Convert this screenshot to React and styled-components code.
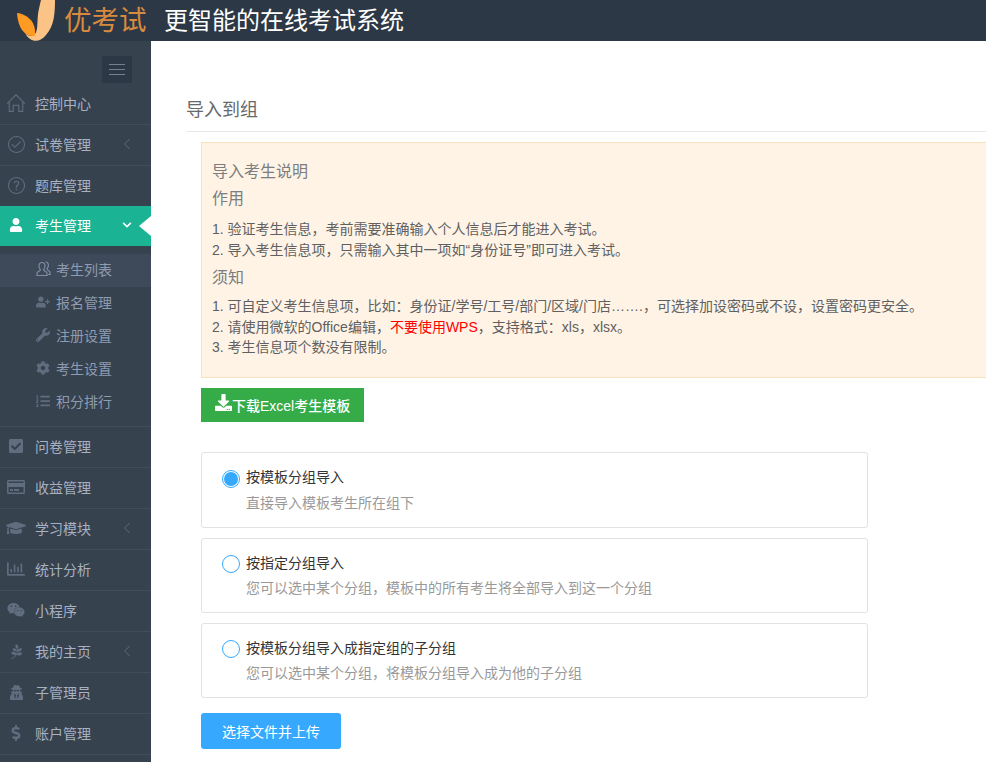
import React from "react";
import styled, { createGlobalStyle } from "styled-components";
import { SlHome, SlCheck, SlQuestion, SlArrowLeft } from "react-icons/sl";
import { FaUser, FaUserPlus, FaWrench, FaCog, FaListOl, FaCheckSquare, FaRegCreditCard, FaGraduationCap, FaRegChartBar, FaWeixin, FaPagelines, FaUserSecret, FaDollarSign, FaDownload, FaChevronDown } from "react-icons/fa";

const Global = createGlobalStyle`
  html, body { margin: 0; padding: 0; height: 100%; overflow: hidden; background: #fff; }
  body { font-family: "Liberation Sans", "Noto Sans CJK SC", sans-serif; font-size: 14px; color: #676a6c; }
  * { box-sizing: border-box; }
`;
const Page = styled.div`display: flex; flex-direction: column; width: 986px; height: 762px; overflow: hidden;`;
const Header = styled.header`height: 41px; flex: none; background: #2c3845; display: flex; align-items: center; padding-left: 17px; overflow: hidden;`;
const LogoMark = styled.svg`width: 38px; height: 41px; flex: none;`;
const Brand = styled.span`font-size: 27.5px; line-height: 41px; color: #d98a3e; margin-left: 9px; width: 100px; white-space: nowrap;`;
const Slogan = styled.span`font-size: 24px; line-height: 41px; color: #fff; white-space: nowrap;`;
const Body = styled.div`display: flex; flex: 1; min-height: 0;`;
const Side = styled.aside`width: 151px; flex: none; background: #37424f; padding-top: 15px; overflow: hidden;`;
const Toggle = styled.div`width: 30px; height: 27px; margin: 0 0 1px 102px; background: #2c3845; display: flex; flex-direction: column; justify-content: center; align-items: center; gap: 4px;
  i { display: block; width: 16px; height: 1px; background: #77818d; }`;
const Item = styled.div`display: flex; align-items: center; position: relative; padding-bottom: 2px; font-size: 14px;
  color: ${p => p.$active ? "#fff" : "#a7b1c2"};
  background: ${p => p.$active ? "#1ab394" : "transparent"};
  border-bottom: ${p => p.$flat ? "none" : "1px solid #424d5b"};
  height: ${p => p.$flat ? "40px" : "41px"};`;
const IconBox = styled.span`width: 35px; flex: none; display: flex; justify-content: center; padding-right: 3px; color: ${p => p.$active ? "#fff" : "#5f6d7e"}; font-size: ${p => p.$size || 16}px;`;
const Arrow = styled.span`position: absolute; left: 122px; font-size: 10px; display: flex; color: ${p => p.$active ? "#fff" : "#5f6d7e"};`;
const Notch = styled.span`position: absolute; right: 0; top: 10px; border: 10px solid transparent; border-right-color: #fff; border-left: 0; border-right-width: 12px;`;
const SubList = styled.div`padding: 8px 0; border-bottom: 1px solid #424d5b; height: 181px;`;
const SubItem = styled.div`height: 33px; display: flex; align-items: center; padding-bottom: 3px; font-size: 14px; color: #8f9bb0; background: ${p => p.$active ? "#3e4a5a" : "transparent"};`;
const SubIcon = styled.span`width: 56px; flex: none; display: flex; justify-content: center; padding-left: 35px; padding-right: 5px; color: #5f6d7e; font-size: 14px;
  svg { flex: none; }`;
const FriendsIcon = styled.svg`width: 15px; height: 16px; fill: none; stroke: #7f8ea6; stroke-width: 1.1;`;
const Main = styled.main`flex: 1; min-width: 0; padding: 56px 0 0 35px; overflow: hidden;`;
const Title = styled.h2`margin: 0; height: 35px; font-size: 18px; font-weight: 400; line-height: 26px; color: #676a6c; border-bottom: 1px solid #e7eaec;`;
const Content = styled.div`padding: 10px 0 0 15px;`;
const Notice = styled.div`width: 820px; height: 236px; background: #fff3e6; border: 1px solid #fbdfc0; padding: 16px 10px;`;
const NoticeTitle = styled.h4`margin: 0; font-size: 16px; font-weight: 400; line-height: 26px; height: ${p => p.$h || 27}px; color: #7b7d7e;`;
const NoticeText = styled.ol`margin: 0 0 ${p => p.$gap}px; padding: 0; list-style: none; font-size: 14px; line-height: 20.5px; color: #606060;
  li { white-space: nowrap; }
  b { font-weight: 400; color: #f00; }`;
const Download = styled.button`display: flex; align-items: center; width: 163px; height: 34px; margin-top: 10px; padding: 0 0 0 14px; border: 0; background: #35ac48; color: #fff; font: inherit; font-size: 14px; font-weight: 500; white-space: nowrap;
  svg { font-size: 17px; margin-top: -5px; flex: none; }`;
const Options = styled.div`display: flex; flex-direction: column; gap: 10px; margin-top: 30px; width: 667px;`;
const Option = styled.div`height: ${p => p.$h}px; border: 1px solid #e2e2e2; border-radius: 3px; padding: ${p => p.$top}px 20px 0; display: grid; grid-template-columns: 24px 1fr; grid-template-rows: 17px auto; row-gap: 7px;`;
const Radio = styled.span`width: 18px; height: 18px; border-radius: 50%; border: 1px solid #36a9ff; display: flex; align-items: center; justify-content: center;
  &::after { content: ""; width: 14px; height: 14px; border-radius: 50%; background: ${p => p.$on ? "#36a9ff" : "transparent"}; }`;
const OptLabel = styled.span`font-size: 14px; line-height: ${p => p.$lh}px; color: #333;`;
const OptDesc = styled.span`grid-column: 2; font-size: 14px; line-height: 18px; color: #999;`;
const Upload = styled.button`display: block; width: 140px; height: 36px; margin-top: 15px; border: 0; border-radius: 3px; background: #36a9ff; color: #fff; font: inherit; font-size: 14px;`;

const Logo = () => (
  <LogoMark viewBox="0 0 38 41">
    <path d="M24 0 H38 C38 14 37 26 29 35 C23 43 13 43 8 33 C12 37 16 36 18 34 C21 30 20 24 21 14 C22 8 23 4 24 0Z" fill="#fcc386" />
    <path d="M0 13 C9 14 17 20 18 30 L18 36 C9 37 1 30 0 13Z" fill="#ff9a22" />
  </LogoMark>
);
const Friends = () => (
  <FriendsIcon viewBox="0 0 15 16">
    <path d="M6 1.5 C8.2 1.5 9.2 3.2 9 5.2 C8.9 6.8 8 8 7.6 8.8 C7.5 9.8 10.6 10.6 11 12 L11.2 14.5 H0.8 L1 12 C1.4 10.6 4.5 9.8 4.4 8.8 C4 8 3.1 6.8 3 5.2 C2.8 3.2 3.8 1.5 6 1.5Z" />
    <path d="M9.5 1 C11.6 1 12.6 2.6 12.4 4.6 C12.3 6.2 11.4 7.4 11 8.2 C11 9.2 13.6 9.8 14 11.2 L14.2 13.4 H12.2" />
  </FriendsIcon>
);

const top = [
  [SlHome, "控制中心", 0, 18],
  [SlCheck, "试卷管理", 1, 17],
  [SlQuestion, "题库管理", 0, 17, true],
];
const rest = [
  [FaCheckSquare, "问卷管理", 0, 16],
  [FaRegCreditCard, "收益管理", 0, 18],
  [FaGraduationCap, "学习模块", 1, 20],
  [FaRegChartBar, "统计分析", 0, 18],
  [FaWeixin, "小程序", 0, 18],
  [FaPagelines, "我的主页", 1, 15],
  [FaUserSecret, "子管理员", 0, 15],
  [FaDollarSign, "账户管理", 0, 16],
];
const subs = [
  [Friends, "考生列表", true],
  [FaUserPlus, "报名管理"],
  [FaWrench, "注册设置"],
  [FaCog, "考生设置"],
  [FaListOl, "积分排行"],
];
const Row = ({ row }) => {
  const [Ic, label, arrow, size, flat] = row;
  return (
    <Item $flat={flat}>
      <IconBox $size={size}><Ic /></IconBox>
      {label}
      {arrow ? <Arrow><SlArrowLeft /></Arrow> : null}
    </Item>
  );
};
const options = [
  ["按模板分组导入", "直接导入模板考生所在组下", true, 76, 17, 15],
  ["按指定分组导入", "您可以选中某个分组，模板中的所有考生将全部导入到这一个分组", false, 75, 16, 17],
  ["按模板分组导入成指定组的子分组", "您可以选中某个分组，将模板分组导入成为他的子分组", false, 75, 16, 17],
];

export default function App() {
  return (
    <Page>
      <Global />
      <Header>
        <Logo />
        <Brand>优考试</Brand>
        <Slogan>更智能的在线考试系统</Slogan>
      </Header>
      <Body>
        <Side>
          <Toggle><i /><i /><i /></Toggle>
          {top.map(r => <Row key={r[1]} row={r} />)}
          <Item $active $flat>
            <IconBox $active $size={14}><FaUser /></IconBox>
            考生管理
            <Arrow $active><FaChevronDown /></Arrow>
            <Notch />
          </Item>
          <SubList>
            {subs.map(([Ic, label, on]) => (
              <SubItem key={label} $active={on}><SubIcon><Ic /></SubIcon>{label}</SubItem>
            ))}
          </SubList>
          {rest.map(r => <Row key={r[1]} row={r} />)}
        </Side>
        <Main>
          <Title>导入到组</Title>
          <Content>
            <Notice>
              <NoticeTitle>导入考生说明</NoticeTitle>
              <NoticeTitle $h={33}>作用</NoticeTitle>
              <NoticeText $gap={5}>
                <li>1. 验证考生信息，考前需要准确输入个人信息后才能进入考试。</li>
                <li>2. 导入考生信息项，只需输入其中一项如“身份证号”即可进入考试。</li>
              </NoticeText>
              <NoticeTitle $h={31}>须知</NoticeTitle>
              <NoticeText $gap={0}>
                <li>1. 可自定义考生信息项，比如：身份证/学号/工号/部门/区域/门店…….，可选择加设密码或不设，设置密码更安全。</li>
                <li>2. 请使用微软的Office编辑，<b>不要使用WPS</b>，支持格式：xls，xlsx。</li>
                <li>3. 考生信息项个数没有限制。</li>
              </NoticeText>
            </Notice>
            <Download><FaDownload />下载Excel考生模板</Download>
            <Options>
              {options.map(([l, d, on, h, t, lh]) => (
                <Option key={l} $h={h} $top={t}>
                  <Radio $on={on} />
                  <OptLabel $lh={lh}>{l}</OptLabel>
                  <OptDesc>{d}</OptDesc>
                </Option>
              ))}
            </Options>
            <Upload>选择文件并上传</Upload>
          </Content>
        </Main>
      </Body>
    </Page>
  );
}
